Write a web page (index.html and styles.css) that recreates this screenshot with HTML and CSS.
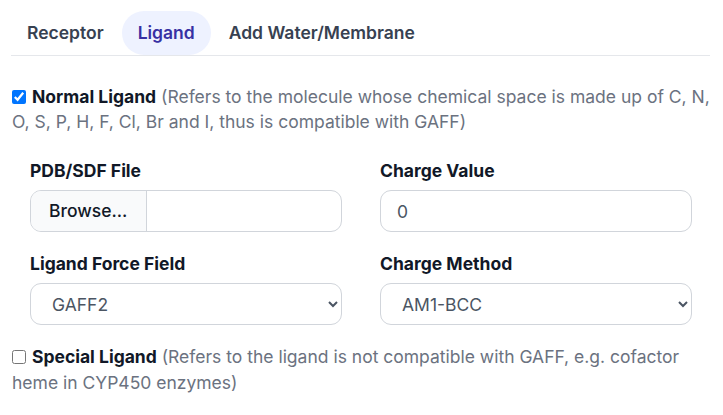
FILE: index.html
```html
<!DOCTYPE html>
<html lang="en">
<head>
<meta charset="utf-8">
<title>Ligand</title>
<link rel="stylesheet" href="styles.css">
</head>
<body>
<div class="panel">
  <nav class="tabs">
    <span class="tab">Receptor</span>
    <span class="tab active">Ligand</span>
    <span class="tab">Add Water/Membrane</span>
  </nav>

  <p class="option first"><input type="checkbox" class="check" checked><strong>Normal Ligand</strong> <span class="hint">(Refers to the molecule whose chemical space is made up of C, N, O, S, P, H, F, Cl, Br and I, thus is compatible with GAFF)</span></p>

  <div class="form">
    <div class="field">
      <div class="label">PDB/SDF File</div>
      <div class="file">
        <span class="browse">Browse...</span>
        <span class="file-name"></span>
      </div>
    </div>
    <div class="field">
      <div class="label">Charge Value</div>
      <input class="text-input" type="text" value="0">
    </div>
    <div class="field">
      <div class="label">Ligand Force Field</div>
      <select class="select"><option>GAFF2</option></select>
    </div>
    <div class="field">
      <div class="label">Charge Method</div>
      <select class="select"><option>AM1-BCC</option></select>
    </div>
  </div>

  <p class="option second"><input type="checkbox" class="check"><strong>Special Ligand</strong> <span class="hint">(Refers to the ligand is not compatible with GAFF, e.g. cofactor heme in CYP450 enzymes)</span></p>
</div>
</body>
</html>
```

FILE: styles.css
```css
* { box-sizing: border-box; }
body {
  margin: 0;
  background: #ffffff;
  font-family: Inter, "Noto Sans", "Liberation Sans", sans-serif;
  font-size: 17.5px;
  line-height: 24px;
  color: #111827;
}
.panel {
  padding: 11px 13px 0 11px;
}
.tabs {
  display: flex;
  gap: 2px;
  border-bottom: 1px solid #e5e7eb;
}
.tab {
  height: 44px;
  display: flex;
  align-items: center;
  padding: 0 16px;
  font-weight: 600;
  color: #374151;
  border-radius: 22px;
}
.tab.active {
  background: #eef2ff;
  color: #3730a3;
}
.option {
  margin: 28px 0 0 1px;
  line-height: 25px;
}
.option.second {
  margin-top: 19px;
  line-height: 26px;
}
.check {
  width: 14px;
  height: 14px;
  margin: 0 6px 0 0;
  vertical-align: -1px;
}
.option strong { font-weight: 700; color: #111827; }
.hint { color: #6b7280; }
.form {
  display: grid;
  grid-template-columns: 312px 312px;
  column-gap: 38px;
  row-gap: 20px;
  padding: 25px 0 0 19px;
}
.label {
  font-weight: 700;
  color: #111827;
  margin-bottom: 7px;
}
.file {
  display: flex;
  height: 42px;
  border: 1px solid #d1d5db;
  border-radius: 11px;
  overflow: hidden;
}
.browse {
  display: flex;
  align-items: center;
  padding: 0 19px 0 18px;
  background: #f9fafb;
  border-right: 1px solid #d1d5db;
  font-weight: 500;
  color: #111827;
}
.file-name { flex: 1; }
.text-input,
.select {
  width: 100%;
  height: 42px;
  border: 1px solid #d1d5db;
  border-radius: 11px;
  background: #ffffff;
  font-family: inherit;
  font-size: 17.5px;
  color: #4b5563;
  margin: 0;
}
.text-input { padding: 0 16px; }
.select { padding: 0 10px 0 17px; }
```
